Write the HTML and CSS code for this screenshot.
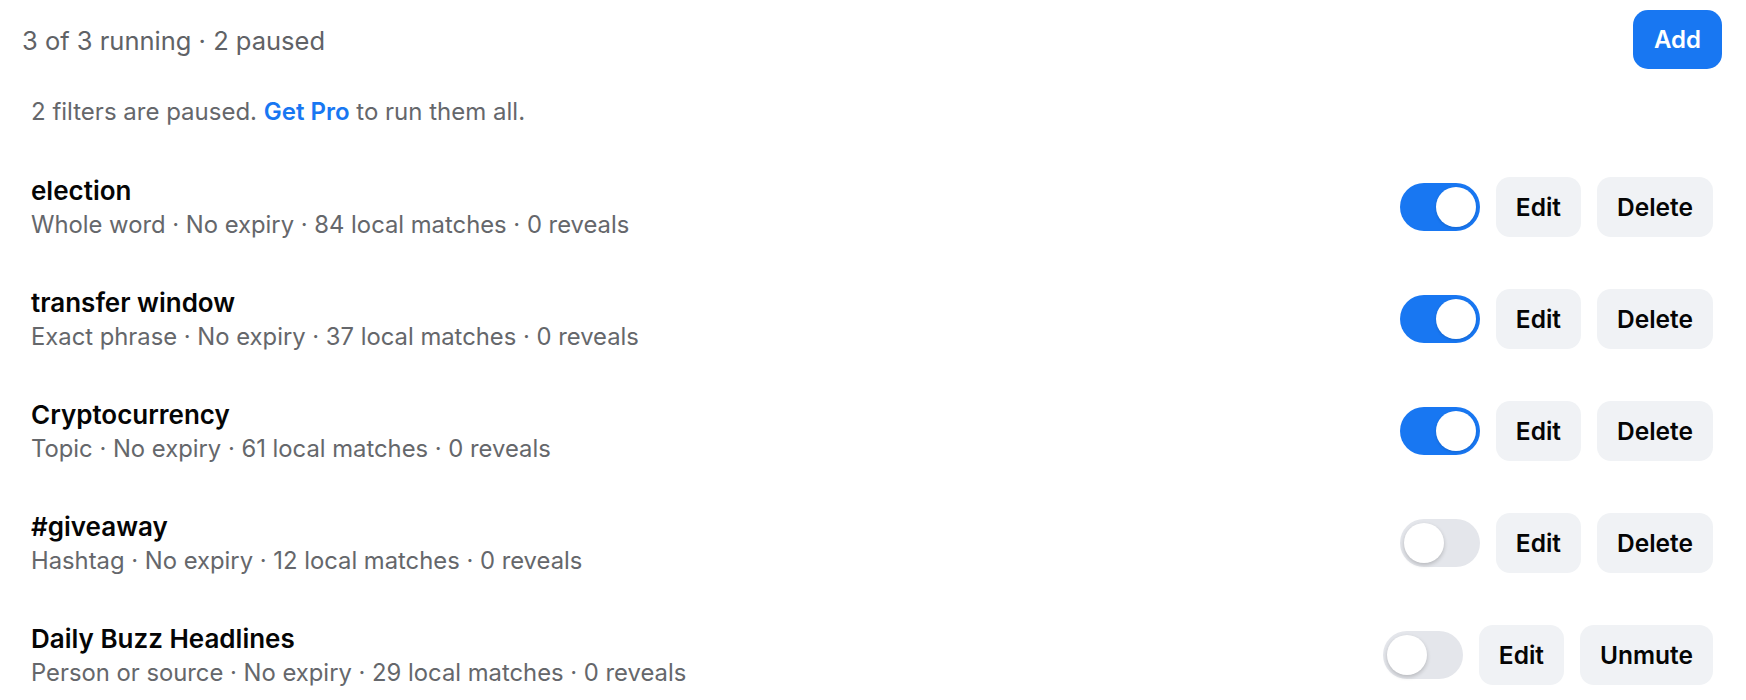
FILE: index.html
```html
<!DOCTYPE html>
<html lang="en">
<head>
    <meta charset="UTF-8">
    <meta name="viewport" content="width=device-width, initial-scale=1.0">
    <title>Muted filters</title>
    <link rel="stylesheet" href="styles.css">
</head>
<body>
    <div class="page">
        <header class="topbar">
            <span class="summary">3 of 3 running · 2 paused</span>
            <button class="btn btn-primary">Add</button>
        </header>

        <p class="notice">2 filters are paused. <a href="#" class="notice-link">Get Pro</a> to run them all.</p>

        <ul class="filter-list">
            <li class="filter-item">
                <div class="filter-info">
                    <div class="filter-name">election</div>
                    <div class="filter-meta">Whole word · No expiry · 84 local matches · 0 reveals</div>
                </div>
                <div class="filter-actions">
                    <span class="toggle on"><span class="knob"></span></span>
                    <button class="btn">Edit</button>
                    <button class="btn">Delete</button>
                </div>
            </li>
            <li class="filter-item">
                <div class="filter-info">
                    <div class="filter-name">transfer window</div>
                    <div class="filter-meta">Exact phrase · No expiry · 37 local matches · 0 reveals</div>
                </div>
                <div class="filter-actions">
                    <span class="toggle on"><span class="knob"></span></span>
                    <button class="btn">Edit</button>
                    <button class="btn">Delete</button>
                </div>
            </li>
            <li class="filter-item">
                <div class="filter-info">
                    <div class="filter-name">Cryptocurrency</div>
                    <div class="filter-meta">Topic · No expiry · 61 local matches · 0 reveals</div>
                </div>
                <div class="filter-actions">
                    <span class="toggle on"><span class="knob"></span></span>
                    <button class="btn">Edit</button>
                    <button class="btn">Delete</button>
                </div>
            </li>
            <li class="filter-item">
                <div class="filter-info">
                    <div class="filter-name">#giveaway</div>
                    <div class="filter-meta">Hashtag · No expiry · 12 local matches · 0 reveals</div>
                </div>
                <div class="filter-actions">
                    <span class="toggle"><span class="knob"></span></span>
                    <button class="btn">Edit</button>
                    <button class="btn">Delete</button>
                </div>
            </li>
            <li class="filter-item">
                <div class="filter-info">
                    <div class="filter-name">Daily Buzz Headlines</div>
                    <div class="filter-meta">Person or source · No expiry · 29 local matches · 0 reveals</div>
                </div>
                <div class="filter-actions">
                    <span class="toggle"><span class="knob"></span></span>
                    <button class="btn">Edit</button>
                    <button class="btn">Unmute</button>
                </div>
            </li>
        </ul>
    </div>
</body>
</html>
```

FILE: styles.css
```css
* {
    margin: 0;
    padding: 0;
    box-sizing: border-box;
}

body {
    font-family: Inter, "Noto Sans", sans-serif;
    background-color: #fff;
    color: #050505;
}

.page {
    padding: 10px 24px 0 22px;
}

.topbar {
    display: flex;
    align-items: center;
    justify-content: space-between;
}

.summary {
    font-size: 25.5px;
    line-height: 32px;
    color: #606266;
    padding-top: 3px;
}

.btn {
    font-family: inherit;
    font-size: 24.5px;
    font-weight: 600;
    color: #050505;
    background: #f0f2f5;
    border: none;
    border-radius: 14px;
    height: 60px;
    padding: 0 20px;
    cursor: pointer;
}

.btn-primary {
    font-size: 24px;
    background: #1877f2;
    color: #fff;
    height: 59px;
    padding: 0 21px;
    border-radius: 15px;
}

.notice {
    margin-top: 28px;
    padding-left: 9px;
    font-size: 24px;
    line-height: 30px;
    color: #65676b;
}

.notice-link {
    color: #1877f2;
    font-weight: 600;
    text-decoration: none;
}

.filter-list {
    list-style: none;
    margin-top: 24px;
    padding: 0 9px;
}

.filter-item {
    display: flex;
    align-items: center;
    justify-content: space-between;
    height: 112px;
}

.filter-info {
    padding-top: 2px;
}

.filter-name {
    font-size: 26px;
    font-weight: 600;
    line-height: 34px;
}

.filter-meta {
    font-size: 23.8px;
    line-height: 34px;
    color: #65676b;
}

.filter-actions {
    display: flex;
    align-items: center;
    gap: 16px;
}

/* switch */
.toggle {
    display: flex;
    align-items: center;
    width: 80px;
    height: 48px;
    padding: 4px;
    border-radius: 24px;
    background: #e4e6eb;
}

.toggle .knob {
    width: 40px;
    height: 40px;
    border-radius: 50%;
    background: #fff;
    box-shadow: 0 2px 4px rgba(0, 0, 0, 0.2);
}

.toggle.on {
    background: #1877f2;
    justify-content: flex-end;
}

.toggle.on .knob {
    box-shadow: 0 1px 3px rgba(0, 0, 0, 0.15);
}
```
